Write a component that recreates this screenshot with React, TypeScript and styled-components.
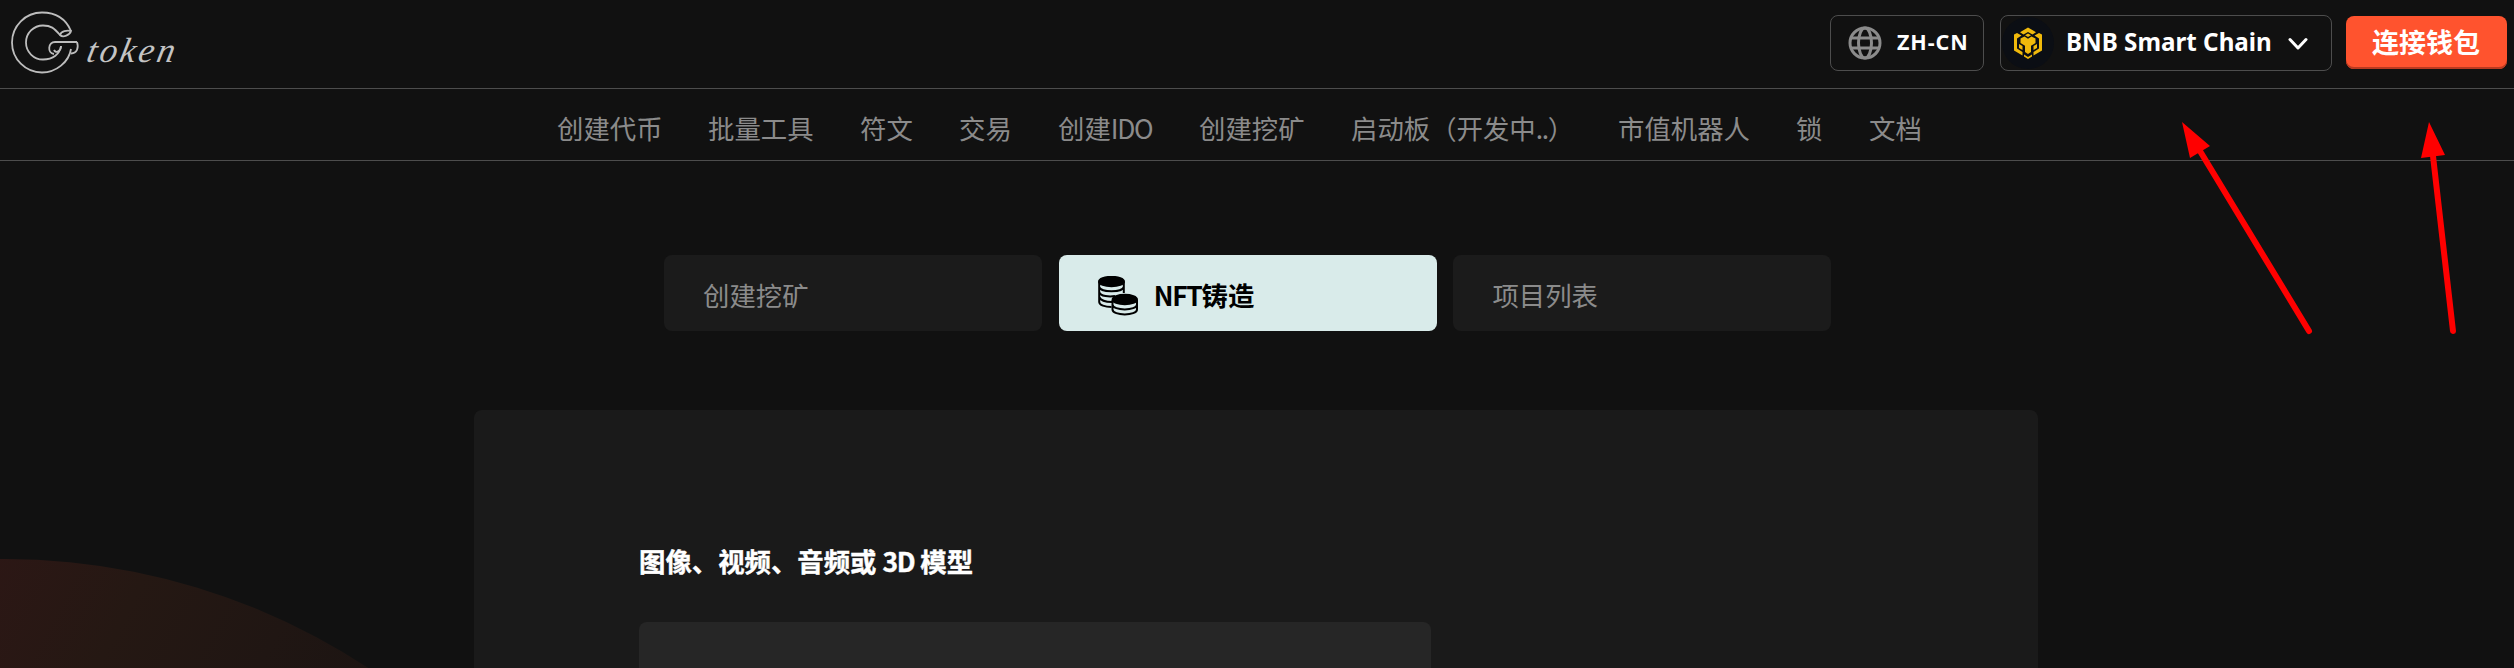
import React from "react";
import styled, { createGlobalStyle } from "styled-components";

const Global = createGlobalStyle`
  * { box-sizing: border-box; }
  body { margin: 0; background: #111; overflow: hidden; font-family: "Noto Sans", "Noto Sans CJK SC", sans-serif; }
`;

const Page = styled.div`
  position: relative;
  height: 668px;
  overflow: hidden;
  background: #111;
  display: flex;
  flex-direction: column;
`;

const Glow = styled.div`
  position: absolute;
  left: -655px;
  top: 559px;
  width: 1320px;
  height: 1320px;
  border-radius: 50%;
  background: linear-gradient(118deg, #2c1715 32%, #251813 40%, #201613 48%, #1b1412 56%, #111 90%);
`;

const Header = styled.header`
  position: relative;
  height: 89px;
  flex: none;
  display: flex;
  justify-content: space-between;
  border-bottom: 1px solid #4d4d4d;
  padding: 11px 7px 0 11px;
`;

const Logo = styled.div`
  display: flex;
  color: #c4c4c4;
`;

const Script = styled.span`
  font: italic 35px/40px "Liberation Serif", serif;
  letter-spacing: 2.9px;
  padding: 20px 0 0 7px;
  transform: skewX(-12deg);
`;

const Controls = styled.div`
  display: flex;
  align-items: flex-start;
`;

const Box = styled.button<{ $w: number; $ml?: number; $pl: number }>`
  width: ${(p) => p.$w}px;
  margin: 4px 0 0 ${(p) => p.$ml ?? 0}px;
  padding: 0 0 0 ${(p) => p.$pl}px;
  height: 56px;
  border: 1px solid #4d4d4d;
  border-radius: 8px;
  background: transparent;
  color: #fff;
  display: flex;
  align-items: center;
  white-space: nowrap;

  svg { flex: none; }
`;

const Label = styled.span<{ $size: number; $ls: number; $ml: number }>`
  font: 700 ${(p) => p.$size}px/30px "Noto Sans", sans-serif;
  letter-spacing: ${(p) => p.$ls}px;
  margin: 0 0 2px ${(p) => p.$ml}px;
`;

const Connect = styled.button`
  width: 161px;
  height: 53px;
  margin: 5px 0 0 14px;
  border: 0;
  border-radius: 8px;
  background: #ff532e;
  box-shadow: inset 0 -2px 0 #b93a20;
  color: #fff;
  font: 700 27px/48px "Noto Sans CJK SC", sans-serif;
  padding: 0 1px 2px 0;
`;

const Nav = styled.nav`
  position: relative;
  height: 72px;
  flex: none;
  border-bottom: 1px solid #4d4d4d;
  display: flex;
  gap: 47px;
  padding: 18.5px 0 0 557px;
  color: #8b8b8b;
  font: 400 26.4px/40px "Noto Sans CJK SC", sans-serif;
  white-space: nowrap;
`;

const NavItem = styled.a<{ $w: number }>`
  width: ${(p) => p.$w}px;
`;

const Tight = styled.span`
  letter-spacing: -1.3px;
`;

const Tabs = styled.div`
  position: relative;
  display: flex;
  gap: 16.7px;
  margin: 94px 0 0 664px;
`;

const Tab = styled.button<{ $active?: boolean }>`
  width: 378px;
  height: 76px;
  border: 0;
  border-radius: 8px;
  display: flex;
  align-items: center;
  padding: 0 0 0 39px;
  background: ${(p) => (p.$active ? "#d9ebea" : "#1b1b1b")};
  color: ${(p) => (p.$active ? "#000" : "#8b8b8b")};
  font: ${(p) => (p.$active ? 700 : 400)} 26.4px/40px "Noto Sans CJK SC", sans-serif;

  svg {
    flex: none;
    margin: 6px 15px 0 0;
  }
`;

const TabText = styled.span`
  padding-top: 4px;
`;

const Panel = styled.main`
  position: relative;
  flex: 1;
  width: 1564px;
  margin: 79px 0 0 474px;
  padding: 131px 0 0 165px;
  border-radius: 8px 8px 0 0;
  background: #1a1a1a;
`;

const Title = styled.h2`
  margin: 0;
  color: #fff;
  font: 700 26.4px/40px "Noto Sans CJK SC", sans-serif;
  -webkit-text-stroke: 0.4px #fff;
`;

const Upload = styled.div`
  width: 792px;
  height: 60px;
  margin-top: 41px;
  border-radius: 8px 8px 0 0;
  background: #262626;
`;

const Arrows = styled.svg`
  position: absolute;
  left: 2170px;
  top: 110px;
`;

const items: [React.ReactNode, number][] = [
  ["创建代币", 104],
  ["批量工具", 105],
  ["符文", 52],
  ["交易", 52],
  [<>创建<Tight>IDO</Tight></>, 94],
  ["创建挖矿", 105],
  [<>启动板（开发中<Tight>..</Tight>）</>, 220],
  ["市值机器人", 131],
  ["锁", 26],
  ["文档", 53],
];

const LogoMark = () => (
  <svg width="70" height="64" viewBox="0 0 70 64" fill="none" stroke="#bdbdbd" strokeWidth="1.8">
    <path d="M60 20C54 6 43 1.500 31 1.500A30 30 0 0 0 31 61.500C45 61.500 58 51 60 38" />
    <path d="M49 24C43 17 40 14.500 32 14.500A17 17 0 0 0 32 48.500C42 48.500 49 43 50 35" />
    <path d="M49 24C52 27 59 24 60 20C56 19 50 20 49 24Z" />
    <path d="M66 31H44C37 31 36 42 43 43M66 31C68 37 66 42 60 42.500M50 35C50 40 45 43 43 39" />
  </svg>
);

const Globe = () => (
  <svg width="34" height="34" viewBox="0 0 34 34" fill="none" stroke="#8b8b8b" strokeWidth="3">
    <circle cx="17" cy="17" r="15" />
    <ellipse cx="17" cy="17" rx="6.500" ry="15" />
    <path d="M3 12H31M3 22H31" />
  </svg>
);

const Bnb = () => (
  <svg width="52" height="52" viewBox="0 0 52 52">
    <circle cx="26" cy="26" r="26" fill="#0b0e14" />
    <g fill="#f0b90b">
      <path d="M26 10.500L34 15.200L30.500 17.500L26 15L21.500 17.500L18 15.200Z" />
      <path d="M26 16.500L29 18.300L26 20L23 18.300Z" />
      <path d="M18.500 21.500L22.500 19.500L26 21.800L29.500 19.500L33.500 21.500V26L29 28.800V35L26 37L23 35V28.800L18.500 26Z" />
      <path d="M12 17.500L15 16L19.500 18.500L15 21.500V31.500L20.500 35V38.500L12 33.500Z" />
      <path d="M40 17.500L37 16L32.500 18.500L37 21.500V31.500L31.500 35V38.500L40 33.500Z" />
      <path d="M17 27L20.500 29V33L17 31ZM35 27L31.500 29V33L35 31Z" />
      <path d="M22 37.500L26 40L30 37.500V39.500L26 42L22 39.500Z" />
    </g>
  </svg>
);

const Chevron = () => (
  <svg width="20" height="14" viewBox="0 0 20 14" fill="none" stroke="#fff" strokeWidth="3">
    <path d="M2 2.500L10 11L18 2.500" strokeLinecap="round" strokeLinejoin="round" />
  </svg>
);

const ChainArrow = styled.span`
  display: flex;
  margin: 1px 23px 0 auto;
`;

const Coins = () => (
  <svg width="41" height="40" viewBox="0 0 41 40" fill="none" stroke="#000" strokeWidth="2">
    <path d="M1.200 6V26C1.200 29 7 31 13.500 31M25.800 6V17M1.200 11C2 16.500 25 16.500 25.800 11M1.200 16C2 20.500 12 21 17 20M1.200 21C3 25 9 26 14 26" />
    <ellipse cx="13.500" cy="5.500" rx="12.500" ry="4.700" fill="#000" />
    <path d="M14.500 24V33.500C14.500 40 39 40 39 33.500V24M14.500 28.500C14.500 35 39 35 39 28.500" />
    <ellipse cx="26.800" cy="23.500" rx="12.200" ry="4.700" fill="#000" />
  </svg>
);

export default function App() {
  return (
    <Page>
      <Global />
      <Glow />
      <Header>
        <Logo>
          <LogoMark />
          <Script>token</Script>
        </Logo>
        <Controls>
          <Box $w={154} $pl={17}>
            <Globe />
            <Label $size={21.5} $ls={0.9} $ml={15}>ZH-CN</Label>
          </Box>
          <Box $w={332} $ml={16} $pl={1}>
            <Bnb />
            <Label $size={24.2} $ls={0} $ml={12}>BNB Smart Chain</Label>
            <ChainArrow><Chevron /></ChainArrow>
          </Box>
          <Connect>连接钱包</Connect>
        </Controls>
      </Header>
      <Nav>
        {items.map(([label, w], i) => <NavItem key={i} $w={w}>{label}</NavItem>)}
      </Nav>
      <Tabs>
        <Tab><TabText>创建挖矿</TabText></Tab>
        <Tab $active><Coins /><TabText><Tight>NFT</Tight>铸造</TabText></Tab>
        <Tab><TabText>项目列表</TabText></Tab>
      </Tabs>
      <Panel>
        <Title>图像、视频、音频或 <Tight>3D</Tight> 模型</Title>
        <Upload />
      </Panel>
      <Arrows width="300" height="230" viewBox="2170 110 300 230" fill="#f00" stroke="#f00">
        <path d="M2200 151L2309 331M2433 156L2453 331" strokeWidth="6" strokeLinecap="round" />
        <path d="M2182 122L2210 146L2190 158ZM2429 122L2445 155L2421 158Z" stroke="none" />
      </Arrows>
    </Page>
  );
}
